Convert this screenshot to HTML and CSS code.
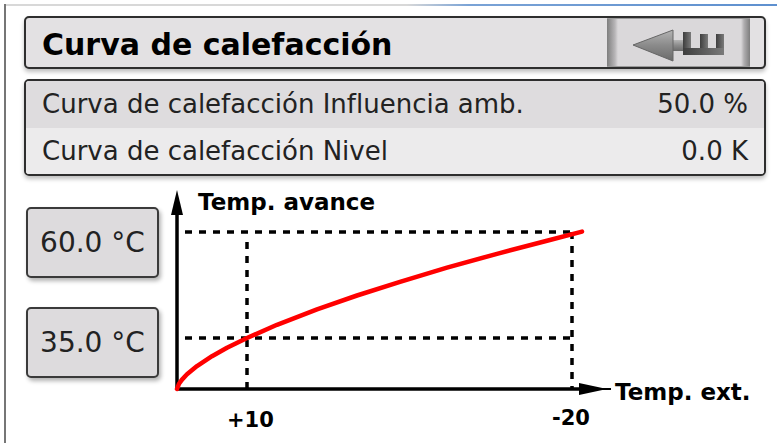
FILE: index.html
```html
<!DOCTYPE html>
<html lang="es">
<head>
  <meta charset="UTF-8">
  <meta name="viewport" content="width=device-width, initial-scale=1.0">
  <title>Curva de calefacción</title>
  <link rel="stylesheet" href="styles.css">
</head>
<body>
  <div class="screen">
    <div class="header">
      <h1 class="title">Curva de calefacción</h1>
      <div class="back">
        <svg width="143" height="50" viewBox="0 0 143 50">
          <defs>
            <linearGradient id="arrowFill" x1="0" y1="0" x2="0" y2="1">
              <stop offset="0" stop-color="#b4b4b4"/>
              <stop offset="0.5" stop-color="#8a8a8a"/>
              <stop offset="1" stop-color="#6a6a6a"/>
            </linearGradient>
            <linearGradient id="barFill" x1="0" y1="0" x2="1" y2="0">
              <stop offset="0" stop-color="#3e3e3e"/>
              <stop offset="1" stop-color="#7a7a7a"/>
            </linearGradient>
          </defs>
          <rect x="62" y="22" width="22" height="11" fill="url(#arrowFill)"/>
          <polygon points="26,27 66,12 66,43" fill="url(#arrowFill)" stroke="#666" stroke-width="1"/>
          <rect x="76" y="14" width="8" height="23" fill="url(#barFill)"/>
          <rect x="93" y="16" width="8" height="21" fill="url(#barFill)"/>
          <rect x="109" y="16" width="8" height="21" fill="url(#barFill)"/>
          <rect x="76" y="30" width="41" height="7" fill="url(#barFill)"/>
        </svg>
      </div>
    </div>

    <div class="params">
      <div class="row odd">
        <span>Curva de calefacción Influencia amb.</span>
        <span>50.0 %</span>
      </div>
      <div class="row even">
        <span>Curva de calefacción Nivel</span>
        <span>0.0 K</span>
      </div>
    </div>

    <div class="lower">
      <div class="presets">
        <div class="preset">60.0 °C</div>
        <div class="preset">35.0 °C</div>
      </div>
      <svg class="chart" width="601" height="263" viewBox="0 0 601 263">
        <!-- guide lines -->
        <g stroke="#000" stroke-width="3.5" stroke-dasharray="7 7" fill="none">
          <line x1="20" y1="52" x2="407" y2="52"/>
          <line x1="407" y1="52" x2="407" y2="209"/>
          <line x1="20" y1="158" x2="407" y2="158"/>
          <line x1="82" y1="62" x2="82" y2="209"/>
        </g>
        <!-- axes -->
        <g stroke="#000" stroke-width="3.5" fill="none">
          <line x1="12" y1="209" x2="12" y2="24"/>
          <line x1="12" y1="209" x2="420" y2="209"/>
          <line x1="420" y1="209" x2="446" y2="209" stroke-width="2"/>
        </g>
        <polygon points="12,10 6,35 18,35" fill="#000"/>
        <polygon points="442,209 414,203 414,215" fill="#000"/>
        <!-- curve -->
        <polyline fill="none" stroke="#ff0000" stroke-width="4.5" stroke-linecap="round" stroke-linejoin="round"
          points="12,209 14,203.8 17,199.6 22,194.3 32,186.1 47,176.2 62,167.8 82,158 112,144.8 152,129.3 192,115.5 235,101.8 282,87.7 332,73.8 382,60.7 417,51.6"/>
        <text class="axis-title" x="33" y="30">Temp. avance</text>
        <text class="axis-title" x="450" y="220">Temp. ext.</text>
        <text class="tick" x="62" y="247">+10</text>
        <text class="tick" x="387" y="245">-20</text>
      </svg>
    </div>
  </div>
</body>
</html>
```

FILE: styles.css
```css
body {
  margin: 0;
  background: #fff;
  font-family: "DejaVu Sans", "Liberation Sans", sans-serif;
  color: #222;
}
.screen {
  margin: 4px 0 0 4px;
  height: 439px;
  box-sizing: border-box;
  border-left: 2px solid #767676;
  padding: 12px 11px 0 18px;
  background: linear-gradient(to right, #d8d8d8 0%, #d8d8d8 52%, #7aa3d6 60%, #5e90cf 100%) top left / 100% 2px no-repeat;
}
.header {
  display: flex;
  height: 53px;
  box-sizing: border-box;
  border: 2px solid #2e2e2e;
  border-radius: 5px;
  background: #e3e1e3;
  box-shadow: 0 3px 4px rgba(0,0,0,0.25);
}
.title {
  flex: 1;
  margin: 0;
  padding: 4px 0 0 16px;
  font-size: 30px;
  font-weight: bold;
  line-height: 45px;
  color: #000;
}
.back {
  width: 143px;
  margin-right: 14px;
  box-sizing: border-box;
  border-top: 1px solid #9a9a9a;
  border-bottom: 1px solid #9a9a9a;
  background: linear-gradient(to right, #7e7e7e 0, #b8b6b8 8px, #dad8da 11px, #dad8da calc(100% - 9px), #b0aeb0 calc(100% - 6px), #7e7e7e 100%);
}
.back svg {
  display: block;
  margin-top: -1px;
}
.params {
  margin-top: 10px;
  border: 2px solid #2e2e2e;
  border-radius: 5px;
  overflow: hidden;
  box-shadow: 0 3px 4px rgba(0,0,0,0.25);
}
.row {
  display: flex;
  justify-content: space-between;
  padding: 0 16px;
  font-size: 26px;
  height: 47px;
  line-height: 47px;
}
.row.odd {
  background: #dedcde;
}
.row.even {
  height: 46px;
  line-height: 46px;
  background: #ecebec;
}
.lower {
  display: flex;
  margin-top: 4px;
}
.presets {
  display: flex;
  flex-direction: column;
  gap: 29px;
  padding: 27px 0 0 2px;
}
.preset {
  width: 133px;
  height: 71px;
  box-sizing: border-box;
  border: 2px solid #3a3a3a;
  border-radius: 5px;
  background: #dddbdd;
  box-shadow: 2px 3px 4px rgba(0,0,0,0.3);
  font-size: 28px;
  line-height: 67px;
  text-align: center;
}
.chart {
  display: block;
  margin-left: 6px;
  overflow: visible;
}
.axis-title {
  font-family: "DejaVu Sans", sans-serif;
  font-weight: bold;
  font-size: 23px;
  fill: #000;
}
.tick {
  font-family: "DejaVu Sans", sans-serif;
  font-weight: bold;
  font-size: 21px;
  fill: #000;
}
```
